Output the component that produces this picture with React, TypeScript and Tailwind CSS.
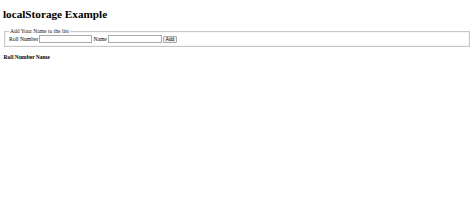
export default function App() {
  return (
    <div className="min-h-screen bg-white px-[3px] pt-[8px] text-black [font-family:'Liberation_Serif',serif]">
      <h1 className="text-[11.2px] leading-[13px] font-bold">localStorage Example</h1>

      <fieldset className="mx-[1px] mt-[7px] border border-[#c8c8c8] px-[4px] pt-[1px] pb-[3px] shadow-[inset_0_0_0_0.5px_#eee]">
        <legend className="px-[1px] text-[5.6px] leading-[6px] text-[#222]">Add Your Name to the list</legend>
        <div className="flex items-center text-[5.6px] leading-[8px]">
          <label className="mr-[1px]">Roll Number</label>
          <input
            type="text"
            className="h-[8px] w-[53px] border border-[#aaa] bg-white"
          />
          <label className="mx-[1px]">Name</label>
          <input
            type="text"
            className="h-[8px] w-[54px] border border-[#aaa] bg-white"
          />
          <button className="ml-[1px] h-[7px] rounded-[1px] border border-[#aaa] bg-[#efefef] px-[2px] text-[4.8px] leading-[5px] [font-family:'Liberation_Sans',sans-serif]">
            Add
          </button>
        </div>
      </fieldset>

      <table className="mt-[7px] text-[5.6px] leading-[7px]">
        <thead>
          <tr>
            <th className="px-[0.5px] text-center font-bold">Roll Number</th>
            <th className="px-[0.5px] text-center font-bold">Name</th>
          </tr>
        </thead>
      </table>
    </div>
  );
}
